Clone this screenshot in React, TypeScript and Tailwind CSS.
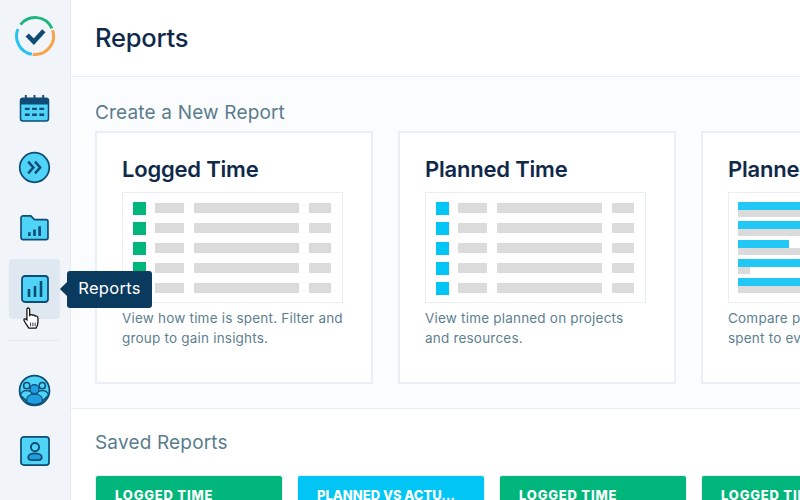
import React from "react";

const stroke = "#0f4c75";
const fill = "#4fd3f7";

function Logo() {
  return (
    <svg width="42" height="42" viewBox="0 0 42 42" fill="none">
      <path d="M6.5 9.6 A18.5 18.5 0 0 1 37.9 13.3" stroke="#1fb57e" strokeWidth="3" />
      <path d="M38.6 15.3 A18.5 18.5 0 0 1 18.7 39.4" stroke="#f5a44a" strokeWidth="3" />
      <path d="M17.8 39.2 A18.5 18.5 0 0 1 3.9 14" stroke="#25c3ee" strokeWidth="3" />
      <path d="M13.2 20 L19.8 26.7 L29.8 15.7" stroke="#0f4c75" strokeWidth="4.6" />
    </svg>
  );
}

function Calendar() {
  return (
    <svg width="31" height="28" viewBox="0 0 32 29">
      <rect x="1.5" y="4.5" width="29" height="23.5" rx="2.5" fill={fill} stroke={stroke} strokeWidth="1.6" />
      <path d="M1.5 11 V6.5 A2 2 0 0 1 3.5 4.5 H28.5 A2 2 0 0 1 30.5 6.5 V11 Z" fill={stroke} />
      <path d="M7 1 V6 M16 1 V6 M25 1 V6" stroke={stroke} strokeWidth="2" />
      <path d="M6 15.5 H11 M13.5 15.5 H18.5 M21 15.5 H26 M6 21.5 H11 M13.5 21.5 H18.5 M21 21.5 H26" stroke={stroke} strokeWidth="2.4" />
    </svg>
  );
}

function Chevrons() {
  return (
    <svg width="33" height="33" viewBox="0 0 34 34" fill="none">
      <circle cx="17" cy="17" r="15.2" fill={fill} stroke={stroke} strokeWidth="1.8" />
      <path d="M10.5 11 L15.8 17 L10.5 23 M17.5 11 L22.8 17 L17.5 23" stroke={stroke} strokeWidth="2.6" />
    </svg>
  );
}

function Folder() {
  return (
    <svg width="31" height="26" viewBox="0 0 32 28">
      <path d="M1.5 24.5 V3 A2 2 0 0 1 3.5 1 H12 L16 5 H28.5 A2 2 0 0 1 30.5 7 V24.5 A2 2 0 0 1 28.5 26.5 H3.5 A2 2 0 0 1 1.5 24.5 Z" fill={fill} stroke={stroke} strokeWidth="1.8" />
      <path d="M10.5 18.5 V22.5 M16 15.5 V22.5 M21.5 12 V22.5" stroke={stroke} strokeWidth="2.8" />
    </svg>
  );
}

function Chart() {
  return (
    <svg width="28" height="28" viewBox="0 0 28 28">
      <rect x="1" y="1" width="26" height="26" rx="3" fill={fill} stroke={stroke} strokeWidth="1.8" />
      <path d="M8 14 V22 M14 11 V22 M20 6 V22" stroke={stroke} strokeWidth="2.6" />
    </svg>
  );
}

function Team() {
  return (
    <svg width="33" height="33" viewBox="0 0 34 34">
      <circle cx="17" cy="17" r="15.4" fill={fill} stroke={stroke} strokeWidth="1.8" />
      <circle cx="9" cy="12" r="3.2" fill={fill} stroke={stroke} strokeWidth="1.5" />
      <circle cx="25" cy="12" r="3.2" fill={fill} stroke={stroke} strokeWidth="1.5" />
      <path d="M2.5 22 C4 15.5 14 15.5 15 22 L10 29 Z M19 22 C20 15.5 30 15.5 31.5 22 L24 29 Z" fill={fill} stroke={stroke} strokeWidth="1.5" />
      <circle cx="17" cy="15.5" r="4.6" fill="#1f9fe0" stroke={stroke} strokeWidth="1.2" />
      <path d="M9 29 V26 C9 19 25 19 25 26 V29 A16 16 0 0 1 9 29 Z" fill="#1f9fe0" stroke={stroke} strokeWidth="1.2" />
    </svg>
  );
}

function Contact() {
  return (
    <svg width="30" height="30" viewBox="0 0 31 31">
      <rect x="1" y="1" width="29" height="29" rx="3" fill={fill} stroke={stroke} strokeWidth="1.8" />
      <circle cx="15.5" cy="11.5" r="4.2" fill={fill} stroke={stroke} strokeWidth="2" />
      <path d="M8.5 22 C8.5 16.5 22.5 16.5 22.5 22 C22.5 24.5 20.5 25 19 25 H12 C10.5 25 8.5 24.5 8.5 22 Z" fill="#1f9fe0" stroke={stroke} strokeWidth="1.8" />
    </svg>
  );
}

function Hand() {
  return (
    <svg width="19" height="22" viewBox="0 0 20 24">
      <path d="M5 2 C6 0.5 8 1 8 3 V9 C9 8 10.5 8 11 9 C12 8.5 13.5 8.5 14 10 C15 9.5 17 10 17 12 V17 C17 20 16 21 15 23 H7 C6 21 4 19 2 15 C1 13 3 12 5 14 Z" fill="#fff" stroke="#111" strokeWidth="1.4" />
      <path d="M9 17 V21 M11.5 17 V21 M14 17 V21" stroke="#111" strokeWidth="0.9" />
    </svg>
  );
}

function MiniTable({ color }: { color: string }) {
  return (
    <div className="mt-[7px] ml-[25px] w-[221px] h-[111px] border border-[#e9eef4] bg-white pt-[9px] pl-[10px] flex flex-col gap-[8px]">
      {[0, 1, 2, 3, 4].map((i) => (
        <div key={i} className="flex items-center h-[12px]">
          <div className={`w-[13px] h-[13px] ${color}`} />
          <div className="ml-[9px] w-[29px] h-[10px] bg-[#dcdbdb]" />
          <div className="ml-[10px] w-[105px] h-[10px] bg-[#dcdbdb]" />
          <div className="ml-[10px] w-[22px] h-[10px] bg-[#dcdbdb]" />
        </div>
      ))}
    </div>
  );
}

function MiniBars() {
  const rows = [
    ["w-[80px]", "w-[80px]"],
    ["w-[80px]", "w-[80px]"],
    ["w-[51px]", "w-[80px]"],
    ["w-[80px]", "w-[12px]"],
    ["w-[80px]", "w-[80px]"],
  ];
  return (
    <div className="mt-[7px] ml-[25px] w-[221px] h-[111px] border border-[#e9eef4] bg-white pt-[9px] pl-[9px] flex flex-col gap-[4px]">
      {rows.map((r, i) => (
        <div key={i} className="flex flex-col">
          <div className={`h-[7.5px] bg-[#22c8f5] ${r[0]}`} />
          <div className={`h-[7.5px] bg-[#dcdbdb] ${r[1]}`} />
        </div>
      ))}
    </div>
  );
}

function Card({ title, children, lines }: { title: string; children: React.ReactNode; lines: string[] }) {
  return (
    <div className="w-[278px] h-[253px] shrink-0 bg-white border-2 border-[#e9eff6]">
      <h3 className="ml-[25px] mt-[20px] h-[32px] text-[22px] leading-[32px] font-semibold text-[#10294a] whitespace-nowrap tracking-[-0.2px]">{title}</h3>
      {children}
      <p className="ml-[25px] mt-[5px] text-[13.5px] leading-[20px] text-[#5d7f90] tracking-[0.2px] whitespace-nowrap">
        {lines[0]}
        <br />
        {lines[1]}
      </p>
    </div>
  );
}

function Saved({ label, color, tight }: { label: string; color: string; tight?: boolean }) {
  return (
    <div className={`w-[188px] h-[40px] shrink-0 rounded-t-[3px] border border-[#e6edf5] border-b-0 ${color} pl-[19px] pt-[11px] text-[13px] leading-[16px] font-extrabold text-white whitespace-nowrap ${tight ? "tracking-[0px]" : "tracking-[0.8px]"}`}>
      {label}
    </div>
  );
}

function NavItem({ children, className }: { children: React.ReactNode; className: string }) {
  return <div className={`flex items-center justify-center ${className}`}>{children}</div>;
}

export default function App() {
  return (
    <div className="w-[800px] h-[500px] overflow-hidden flex bg-white font-['Inter',sans-serif]">
      <aside className="relative w-[71px] h-[500px] shrink-0 bg-[#f1f5f9] border-r border-[#e4ebf3] flex flex-col items-start pl-[9px]">
        <NavItem className="w-[51px] h-[42px] mt-[15px]"><Logo /></NavItem>
        <NavItem className="w-[51px] h-[28px] mt-[37px]"><Calendar /></NavItem>
        <NavItem className="w-[51px] h-[33px] mt-[29px]"><Chevrons /></NavItem>
        <NavItem className="w-[51px] h-[26px] mt-[31px]"><Folder /></NavItem>
        <NavItem className="relative w-[51px] h-[60px] mt-[18px] rounded-[4px] bg-[#dfe8f1]">
          <Chart />
          <div className="absolute left-[58px] top-[12px] w-[85px] h-[37px] rounded-[3px] bg-[#0b3a5f] flex items-center justify-center pb-[2px] text-[16.5px] text-white z-10 tracking-[0.3px]">
            Reports
            <div className="absolute left-[-5px] top-[13px] w-[10px] h-[10px] rotate-45 bg-[#0b3a5f]" />
          </div>
          <div className="absolute left-[13px] top-[48px] z-20"><Hand /></div>
        </NavItem>
        <div className="w-[50px] h-px bg-[#dfe6ee] mt-[21px]" />
        <NavItem className="w-[51px] h-[33px] mt-[33px]"><Team /></NavItem>
        <NavItem className="w-[51px] h-[30px] mt-[29px]"><Contact /></NavItem>
      </aside>

      <main className="flex-1 min-w-0 flex flex-col">
        <header className="h-[77px] shrink-0 border-b border-[#e6edf5] bg-white pl-[24px] pt-[21px]">
          <h1 className="text-[25.5px] leading-[34px] font-medium text-[#10294a] tracking-[-0.2px]">Reports</h1>
        </header>
        <section className="h-[332px] shrink-0 bg-[#fbfcfd] border-b border-[#e6edf5] pl-[24px] pt-[24px] overflow-hidden">
          <h2 className="text-[19px] leading-[24px] text-[#5a7d8d] whitespace-nowrap tracking-[0.17px]">Create a New Report</h2>
          <div className="mt-[6px] flex gap-[25px] w-[760px]">
            <Card title="Logged Time" lines={["View how time is spent. Filter and", "group to gain insights."]}>
              <MiniTable color="bg-[#00b67a]" />
            </Card>
            <Card title="Planned Time" lines={["View time planned on projects", "and resources."]}>
              <MiniTable color="bg-[#00c5f5]" />
            </Card>
            <Card title="Planned vs Actual" lines={["Compare planned time to time", "spent to evaluate progress."]}>
              <MiniBars />
            </Card>
          </div>
        </section>
        <section className="flex-1 min-h-0 bg-white pl-[24px] pt-[22px] overflow-hidden">
          <h2 className="text-[19px] leading-[24px] text-[#5a7d8d] whitespace-nowrap tracking-[0.17px]">Saved Reports</h2>
          <div className="mt-[20px] flex gap-[14px] w-[900px]">
            <Saved label="LOGGED TIME" color="bg-[#00b67a]" />
            <Saved label="PLANNED VS ACTU…" color="bg-[#00c5f5]" tight />
            <Saved label="LOGGED TIME" color="bg-[#00b67a]" />
            <Saved label="LOGGED TIME" color="bg-[#00b67a]" />
          </div>
        </section>
      </main>
    </div>
  );
}
